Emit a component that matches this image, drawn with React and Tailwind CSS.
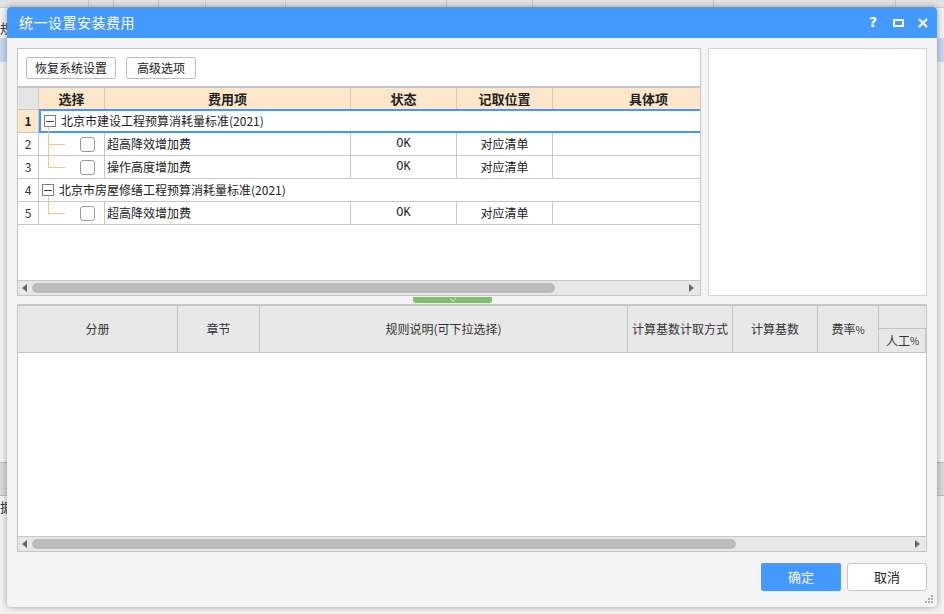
import React from 'react';

const F = { fontFamily: '"Noto Sans CJK SC", "Noto Sans", sans-serif' };

function TreeLines({ up = true, down = false }) {
  return (
    <svg className="absolute left-0 top-0" width="30" height="23" style={{ overflow: 'visible' }}>
      <line x1="9.5" y1={up ? -6 : 0} x2="9.5" y2={down ? 23 : 11.5} stroke="#f7c77c" strokeWidth="1" />
      <line x1="9" y1="11.5" x2="26" y2="11.5" stroke="#f7c77c" strokeWidth="1" />
    </svg>
  );
}

function Check() {
  return <span className="absolute left-[41px] top-[4px] w-[15px] h-[15px] rounded-[3px] border border-[#9a9a9a] bg-white" />;
}

function Minus() {
  return (
    <span className="w-[12px] h-[12px] border border-[#7f7f7f] bg-white flex items-center justify-center shrink-0">
      <span className="w-[8px] h-[1px] bg-[#444]" />
    </span>
  );
}

function GroupRow({ n, text, selected }) {
  return (
    <div className="flex h-[23px] border-b border-[#c8c8c8]">
      <div className={`w-[21px] shrink-0 border-r border-[#c8c8c8] flex items-center justify-center text-[12px] ${selected ? 'bg-[#fde7ca] font-bold text-[#222]' : 'bg-white text-[#333]'}`}>{n}</div>
      <div className={`flex-1 flex items-center gap-[5px] pl-[3px] text-[12px] text-[#222] ${selected ? 'border-2 border-r-0 border-[#4299f7] -mt-[1px] -mb-[1px] pl-[1px]' : ''}`}>
        <Minus />
        <span>{text}</span>
      </div>
    </div>
  );
}

function ItemRow({ n, text, up, down }) {
  return (
    <div className="flex h-[23px] border-b border-[#c8c8c8] text-[12px] text-[#222]">
      <div className="w-[21px] shrink-0 border-r border-[#c8c8c8] flex items-center justify-center text-[#333]">{n}</div>
      <div className="w-[66px] shrink-0 border-r border-[#c8c8c8] relative">
        <TreeLines up={up} down={down} />
        <Check />
      </div>
      <div className="w-[246px] shrink-0 border-r border-[#c8c8c8] flex items-center pl-[2px]">{text}</div>
      <div className="w-[106px] shrink-0 border-r border-[#c8c8c8] flex items-center justify-center" style={{ fontFamily: '"Liberation Mono", monospace', fontSize: 12 }}>OK</div>
      <div className="w-[96px] shrink-0 border-r border-[#c8c8c8] flex items-center justify-center">对应清单</div>
      <div className="flex-1" />
    </div>
  );
}

function ScrollBar({ thumb }) {
  return (
    <div className="h-[15px] shrink-0 border-t border-[#c8c8c8] bg-[#e8e8e8] flex items-center relative">
      <span className="ml-[4px] w-0 h-0 border-y-[4px] border-y-transparent border-r-[5px] border-r-[#666]" />
      <span className="ml-[5px] h-[10px] rounded-full bg-[#bcbcbc]" style={{ width: thumb }} />
      <span className="ml-auto mr-[6px] w-0 h-0 border-y-[4px] border-y-transparent border-l-[5px] border-l-[#666]" />
    </div>
  );
}

function Background() {
  const lines = [88, 113, 158, 205, 285, 446, 532, 713, 895];
  return (
    <div className="w-[944px] h-[614px] bg-[#f2f2f2] relative overflow-hidden">
      <div className="h-[8px] bg-[#e3e3e3] border-b border-[#cfcfcf] flex">
        {lines.map((x, i) => (
          <span key={i} className="absolute top-0 h-[8px] w-[1px] bg-[#c9c9c9]" style={{ left: x }} />
        ))}
      </div>
      <div className="absolute left-0 top-[18px] text-[13px] text-[#333]">规</div>
      <div className="absolute left-0 top-[38px] w-[944px] h-[24px] bg-[#c5d8ef]" />
      <div className="absolute left-0 top-[462px] w-[944px] h-[34px] bg-[#d8d8d8] border-y border-[#bdbdbd]" />
      <div className="absolute left-0 top-[497px] text-[13px] text-[#333]">据</div>
    </div>
  );
}

export default function App() {
  return (
    <div className="relative w-[944px] h-[614px] overflow-hidden" style={F}>
      <Background />

      <div className="absolute left-[7px] top-[7px] w-[930px] h-[600px] rounded-[4px] bg-[#f4f4f4] shadow-[0_0_6px_rgba(0,0,0,0.35)] flex flex-col overflow-hidden">
        {/* title */}
        <div className="h-[31px] shrink-0 bg-[#4499fc] flex items-center pl-[12px] pr-[9px] text-white">
          <span className="text-[14px] tracking-[0.5px]">统一设置安装费用</span>
          <div className="ml-auto flex items-center">
            <span className="text-[14px] font-bold w-[12px] text-center" style={{ fontFamily: '"DejaVu Sans", sans-serif' }}>?</span>
            <span className="ml-[14px] w-[11px] h-[8px] border-2 border-white" />
            <svg className="ml-[14px]" width="10" height="10" viewBox="0 0 10 10">
              <path d="M1 1 L9 9 M9 1 L1 9" stroke="#fff" strokeWidth="2.2" />
            </svg>
          </div>
        </div>

        <div className="flex-1 flex flex-col px-[10px] pt-[10px]">
          {/* upper area */}
          <div className="flex h-[248px] gap-[7px]">
            <div className="w-[684px] shrink-0 border border-[#c6c6c6] bg-white flex flex-col">
              <div className="flex gap-[10px] pl-[8px] pt-[8px] h-[37px]">
                <button className="h-[22px] w-[90px] border border-[#bdbdbd] rounded-[2px] bg-[#fdfdfd] text-[12px] text-[#222]">恢复系统设置</button>
                <button className="h-[22px] w-[70px] border border-[#bdbdbd] rounded-[2px] bg-[#fdfdfd] text-[12px] text-[#222]">高级选项</button>
              </div>
              <div className="border-t-2 border-[#c4c4c4]">
                <div className="flex h-[22px] border-b border-[#d9c8b0] text-[13px] font-bold text-[#222]">
                  <div className="w-[21px] shrink-0 bg-[#e6e6e6] border-r border-[#d0d0d0]" />
                  <div className="w-[66px] shrink-0 bg-[#fde7ca] border-r border-[#dcc9ae] flex items-center justify-center">选择</div>
                  <div className="w-[246px] shrink-0 bg-[#fde7ca] border-r border-[#dcc9ae] flex items-center justify-center">费用项</div>
                  <div className="w-[106px] shrink-0 bg-[#fde7ca] border-r border-[#dcc9ae] flex items-center justify-center">状态</div>
                  <div className="w-[96px] shrink-0 bg-[#fde7ca] border-r border-[#dcc9ae] flex items-center justify-center">记取位置</div>
                  <div className="flex-1 bg-[#fde7ca] flex items-center justify-center pl-[44px]">具体项</div>
                </div>
                <GroupRow n="1" text="北京市建设工程预算消耗量标准(2021)" selected />
                <ItemRow n="2" text="超高降效增加费" up down />
                <ItemRow n="3" text="操作高度增加费" up />
                <GroupRow n="4" text="北京市房屋修缮工程预算消耗量标准(2021)" />
                <ItemRow n="5" text="超高降效增加费" up />
              </div>
              <div className="mt-auto">
                <ScrollBar thumb={523} />
              </div>
            </div>
            <div className="flex-1 border border-[#d4d4d4] bg-white" />
          </div>

          {/* splitter */}
          <div className="h-[8px] relative">
            <div className="ml-[396px] mt-[1px] w-[79px] h-[6px] rounded-b-[3px] bg-[#7fc16a] flex justify-center">
              <svg width="8" height="6" viewBox="0 0 8 6">
                <path d="M1 1 L4 4.5 L7 1" stroke="#d8f0d0" strokeWidth="1" fill="none" />
              </svg>
            </div>
          </div>

          {/* lower area */}
          <div className="h-[248px] border border-[#c6c6c6] border-t-2 bg-white flex flex-col">
            <div className="flex h-[47px] bg-[#e8e8e8] border-b border-[#c4c4c4] text-[12px] text-[#333]">
              <div className="w-[160px] shrink-0 border-r border-[#c4c4c4] flex items-center justify-center">分册</div>
              <div className="w-[82px] shrink-0 border-r border-[#c4c4c4] flex items-center justify-center">章节</div>
              <div className="w-[368px] shrink-0 border-r border-[#c4c4c4] flex items-center justify-center">规则说明(可下拉选择)</div>
              <div className="w-[105px] shrink-0 border-r border-[#c4c4c4] flex items-center justify-center">计算基数计取方式</div>
              <div className="w-[85px] shrink-0 border-r border-[#c4c4c4] flex items-center justify-center">计算基数</div>
              <div className="w-[61px] shrink-0 border-r border-[#c4c4c4] flex items-center justify-center">费率<span className="text-[10px]">%</span></div>
              <div className="flex-1 flex flex-col">
                <div className="h-[23px] border-b border-[#c4c4c4]" />
                <div className="flex-1 border-r border-[#c4c4c4] flex items-center pl-[7px]">人工<span className="text-[10px]">%</span></div>
              </div>
            </div>
            <div className="flex-1" />
            <ScrollBar thumb={704} />
          </div>

          {/* footer */}
          <div className="flex justify-end gap-[6px] mt-[11px]">
            <button className="w-[80px] h-[28px] rounded-[2px] bg-[#4499fc] text-white text-[13px]">确定</button>
            <button className="w-[80px] h-[28px] rounded-[3px] border border-[#c8c8c8] bg-white text-[#222] text-[13px]">取消</button>
          </div>
        </div>

        <svg className="absolute right-[4px] bottom-[4px]" width="8" height="8" viewBox="0 0 8 8">
          <rect x="6" y="0" width="2" height="2" fill="#aaa" />
          <rect x="3" y="3" width="2" height="2" fill="#aaa" />
          <rect x="6" y="3" width="2" height="2" fill="#aaa" />
          <rect x="0" y="6" width="2" height="2" fill="#aaa" />
          <rect x="3" y="6" width="2" height="2" fill="#aaa" />
          <rect x="6" y="6" width="2" height="2" fill="#aaa" />
        </svg>
      </div>
    </div>
  );
}
